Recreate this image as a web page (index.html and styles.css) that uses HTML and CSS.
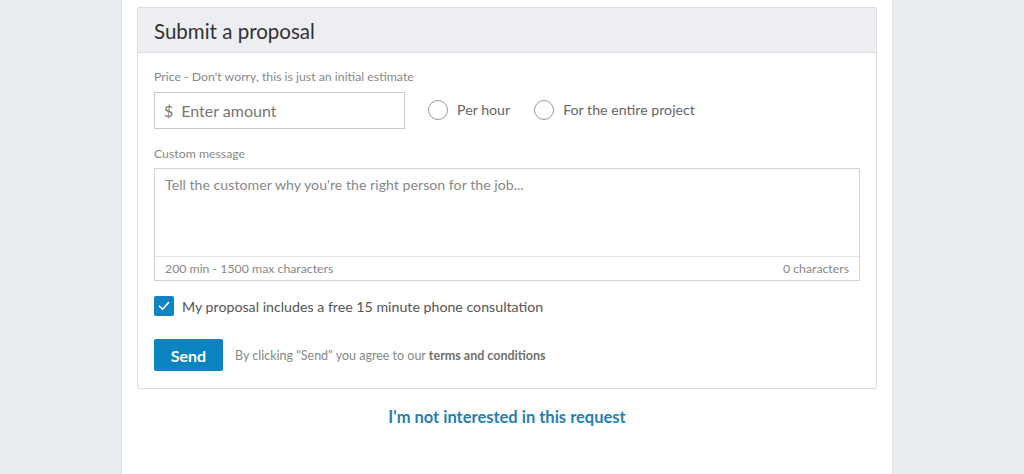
FILE: index.html
```html
<!DOCTYPE html>
<html lang="en">
<head>
    <meta charset="UTF-8">
    <meta name="viewport" content="width=device-width, initial-scale=1.0">
    <title>Submit a proposal</title>
    <link rel="stylesheet" href="styles.css">
</head>
<body>

<div class="column">
    <section class="card">
        <header class="card-header">
            <h2>Submit a proposal</h2>
        </header>

        <form class="card-body">
            <label class="field-label">Price - Don't worry, this is just an initial estimate</label>
            <div class="price-row">
                <div class="amount">
                    <span class="currency">$</span>
                    <input type="text" placeholder="Enter amount">
                </div>
                <label class="radio"><span class="circle"></span>Per hour</label>
                <label class="radio"><span class="circle"></span>For the entire project</label>
            </div>

            <label class="field-label">Custom message</label>
            <div class="message">
                <textarea placeholder="Tell the customer why you're the right person for the job..."></textarea>
                <div class="message-footer">
                    <span>200 min - 1500 max characters</span>
                    <span>0 characters</span>
                </div>
            </div>

            <label class="check">
                <span class="box">
                    <svg width="12" height="10" viewBox="0 0 12 10"><path d="M1.5 5.2 L4.6 8.2 L10.5 1.6" fill="none" stroke="#fff" stroke-width="1.6" stroke-linecap="round" stroke-linejoin="round"/></svg>
                </span>
                My proposal includes a free 15 minute phone consultation
            </label>

            <div class="actions">
                <button type="button">Send</button>
                <p>By clicking "Send" you agree to our <strong>terms and conditions</strong></p>
            </div>
        </form>
    </section>

    <a class="decline" href="#">I'm not interested in this request</a>
</div>

</body>
</html>
```

FILE: styles.css
```css
body {
    font-family: Lato, "Open Sans", sans-serif;
    margin: 0;
    background-color: #eaedf0;
    color: #333;
}
.column {
    width: 740px;
    height: 474px;
    margin-left: 121px;
    padding: 7px 15px 0;
    box-sizing: content-box;
    background-color: white;
    border-left: 1px solid #dfe2e5;
    border-right: 1px solid #dfe2e5;
}
.card {
    border: 1px solid #dadcde;
    border-radius: 2px;
    background-color: white;
}
.card-header {
    background-color: #eceef1;
    border-bottom: 1px solid #dadcde;
    height: 44px;
    padding: 0 16px;
    display: flex;
    align-items: center;
}
.card-header h2 {
    margin: 0 0 -1px;
    font-size: 20.5px;
    font-weight: normal;
    color: #333;
}
.card-body {
    padding: 16px 16px 17px;
}
.field-label {
    display: block;
    font-size: 12.3px;
    color: #888;
    line-height: 16px;
}
.price-row {
    display: flex;
    align-items: center;
    margin-top: 7px;
    margin-bottom: 17px;
}
.amount {
    width: 251px;
    height: 37px;
    box-sizing: border-box;
    border: 1px solid #c9c9c9;
    display: flex;
    align-items: center;
    padding-left: 9px;
}
.currency {
    font-size: 16px;
    color: #777;
    margin-right: 8px;
}
.amount input {
    border: none;
    outline: none;
    font-family: inherit;
    font-size: 16px;
    padding: 0;
    width: 200px;
}
.amount input::placeholder {
    color: #777;
}
.radio {
    display: flex;
    align-items: center;
    font-size: 14.2px;
    color: #666;
    margin-left: 23px;
    margin-bottom: 2px;
}
.radio + .radio {
    margin-left: 24px;
}
.circle {
    width: 18px;
    height: 18px;
    border: 1px solid #999;
    border-radius: 50%;
    margin-right: 9px;
}
.message {
    margin-top: 6px;
    border: 1px solid #d3d3d3;
}
.message textarea {
    display: block;
    width: 100%;
    height: 87px;
    box-sizing: border-box;
    border: none;
    outline: none;
    resize: none;
    padding: 7px 10px;
    font-family: inherit;
    font-size: 14.2px;
}
.message textarea::placeholder {
    color: #888;
}
.message-footer {
    display: flex;
    justify-content: space-between;
    border-top: 1px solid #e3e3e3;
    height: 23px;
    align-items: center;
    padding: 0 10px;
    font-size: 12.3px;
    color: #888;
}
.check {
    display: flex;
    align-items: center;
    margin-top: 15px;
    font-size: 14.2px;
    color: #555;
}
.box {
    width: 20px;
    height: 20px;
    border-radius: 2px;
    background-color: #0f84c2;
    display: flex;
    align-items: center;
    justify-content: center;
    margin-right: 8px;
}
.actions {
    display: flex;
    align-items: center;
    margin-top: 23px;
}
.actions button {
    background-color: #0a84c1;
    color: white;
    border: none;
    border-radius: 2px;
    width: 69px;
    height: 32px;
    font-family: inherit;
    font-size: 16px;
    font-weight: bold;
    cursor: pointer;
}
.actions p {
    margin: 0 0 0 12px;
    font-size: 12.5px;
    color: #888;
}
.actions strong {
    color: #707070;
}
.decline {
    display: block;
    text-align: center;
    margin-top: 18px;
    font-size: 16.5px;
    font-weight: bold;
    color: #1f7fb5;
    text-decoration: none;
}
```
